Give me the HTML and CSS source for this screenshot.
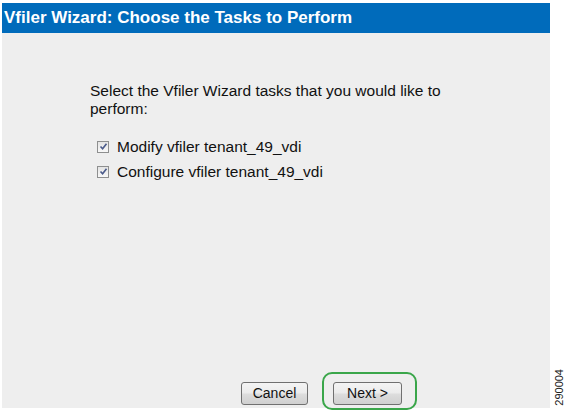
FILE: index.html
```html
<!DOCTYPE html>
<html>
<head>
  <title>Vfiler Wizard</title>
  <meta name="viewport" content="width=device-width, initial-scale=1.0">
  <link rel="stylesheet" href="styles.css">
</head>
<body>
  <div class="page">
    <div class="dialog">
      <div class="header">Vfiler Wizard: Choose the Tasks to Perform</div>
      <div class="content">
        <p class="intro">Select the Vfiler Wizard tasks that you would like to perform:</p>
        <ul class="tasks">
          <li>
            <span class="check"><svg width="9" height="9" viewBox="0 0 9 9"><path d="M1.5 4.5 L3.6 6.8 L7.5 1.8" fill="none" stroke="#4a5a8a" stroke-width="1.6"/></svg></span>
            Modify vfiler tenant_49_vdi
          </li>
          <li>
            <span class="check"><svg width="9" height="9" viewBox="0 0 9 9"><path d="M1.5 4.5 L3.6 6.8 L7.5 1.8" fill="none" stroke="#4a5a8a" stroke-width="1.6"/></svg></span>
            Configure vfiler tenant_49_vdi
          </li>
        </ul>
      </div>
      <div class="footer">
        <button class="btn">Cancel</button>
        <div class="highlight">
          <button class="btn btn-next">Next &gt;</button>
        </div>
      </div>
    </div>
    <div class="stamp">290004</div>
  </div>
</body>
</html>
```

FILE: styles.css
```css
body {
  margin: 0;
  background-color: #fff;
  font-family: "Liberation Sans", Arial, sans-serif;
  color: #000;
}

.page {
  display: flex;
  width: 566px;
  height: 412px;
}

.dialog {
  width: 548px;
  height: 405px;
  margin: 3px 0 0 2px;
  background-color: #eeeeee;
  display: flex;
  flex-direction: column;
}

.header {
  height: 30px;
  background-color: #006bbb;
  color: #fff;
  font-weight: bold;
  font-size: 17px;
  line-height: 29px;
  padding-left: 2px;
}

.content {
  flex: 1;
  padding: 49px 0 0 88px;
}

.intro {
  margin: 0;
  width: 365px;
  font-size: 15.5px;
  line-height: 18px;
  color: #111;
}

.tasks {
  list-style: none;
  margin: 16px 0 0 0;
  padding: 0 0 0 7px;
  font-size: 15.5px;
  color: #111;
}

.tasks li {
  display: flex;
  align-items: center;
  height: 25px;
  gap: 8px;
}

.check {
  width: 12px;
  height: 12px;
  box-sizing: border-box;
  border: 1px solid #8e8f8f;
  background: linear-gradient(#e4e4e4, #f8f8f8);
  display: flex;
  align-items: center;
  justify-content: center;
}

.check svg {
  display: block;
}

.footer {
  display: flex;
  align-items: center;
  padding: 0 0 0 239px;
  height: 37px;
  gap: 14px;
}

.btn {
  font-family: "Liberation Sans", Arial, sans-serif;
  font-size: 14px;
  color: #111;
  height: 23px;
  padding: 0;
  border: 1px solid #707070;
  border-radius: 3px;
  background: linear-gradient(#f4f4f4 0%, #ececec 45%, #dcdcdc 55%, #d0d0d0 100%);
  width: 67px;
  margin-top: 7px;
}

.highlight {
  border: 2px solid #3aa64a;
  border-radius: 10px;
  padding: 4px 13px 0 9px;
  margin-top: 3px;
  box-sizing: border-box;
  height: 38px;
  display: flex;
  align-items: center;
}

.btn-next {
  width: 69px;
  margin-top: 0;
}

.stamp {
  align-self: flex-end;
  writing-mode: vertical-rl;
  transform: rotate(180deg);
  font-size: 11px;
  margin: 0 0 6px 3px;
  color: #222;
}
```
